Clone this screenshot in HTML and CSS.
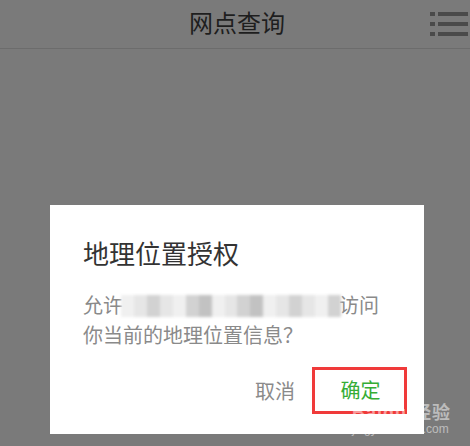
FILE: index.html
```html
<!DOCTYPE html>
<html>

<head>
  <meta charset="utf-8" />
  <title>网点查询</title>
  <link rel="stylesheet" href="styles.css">
</head>

<body>
  <div class="header-sec">
    <span class="header-text">网点查询</span>
    <svg class="menu-icon" width="38" height="26" viewBox="0 0 38 26">
      <rect x="0" y="2" width="5" height="4" fill="#4a4a4a" />
      <rect x="0" y="12" width="5" height="4" fill="#4a4a4a" />
      <rect x="0" y="22" width="5" height="4" fill="#4a4a4a" />
      <rect x="8" y="2" width="30" height="4" fill="#4a4a4a" />
      <rect x="8" y="12" width="30" height="4" fill="#4a4a4a" />
      <rect x="8" y="22" width="30" height="4" fill="#4a4a4a" />
    </svg>
  </div>
  <div class="page-body">
    <div class="dialog">
      <div class="dialog-title">地理位置授权</div>
      <div class="dialog-text">
        允许<span class="mosaic"><i class="m3"></i><i class="m1"></i><i class="m2"></i><i class="m1"></i><i class="m3"></i><i class="m2"></i><i class="m4"></i><i class="m3"></i><i class="m1"></i><i class="m2"></i><i class="m4"></i><i class="m3"></i><i class="m1"></i><i class="m2"></i><i class="m1"></i><i class="m3"></i><i class="m2"></i></span>访问<br>你当前的地理位置信息？
      </div>
      <div class="dialog-buttons">
        <a class="dlg-button cancel">取消</a>
        <a class="dlg-button confirm">确定</a>
      </div>
    </div>
  </div>
  <div class="watermark">
    <div class="wm-logo">Baidu 经验</div>
    <div class="wm-url">jingyan.baidu.com</div>
  </div>
</body>

</html>
```

FILE: styles.css
```css
body {
  padding: 0;
  margin: 0;
  width: 470px;
  height: 446px;
  overflow: hidden;
  background-color: #7a7a7a;
  font-family: "Noto Sans CJK SC", "Noto Sans", sans-serif;
  position: relative;
}

div.header-sec {
  height: 48px;
  border-bottom: 1px solid #6c6c6c;
  display: flex;
  align-items: center;
  justify-content: center;
  position: relative;
}

.header-text {
  font-size: 24px;
  color: #1e1e1e;
  margin-left: 4px;
  margin-top: -6px;
}

.menu-icon {
  position: absolute;
  right: 2px;
  top: 10px;
}

.page-body {
  padding-top: 156px;
  padding-left: 50px;
}

.dialog {
  width: 374px;
  background-color: #ffffff;
  padding: 30px 17px 20px 33px;
  box-sizing: border-box;
}

.dialog-title {
  font-size: 26px;
  line-height: 36px;
  color: #333333;
}

.dialog-text {
  margin-top: 19px;
  font-size: 20px;
  line-height: 30px;
  color: #8a8a8a;
  white-space: nowrap;
}

.mosaic {
  display: inline-flex;
  vertical-align: middle;
  width: 220px;
  height: 22px;
  margin-top: -4px;
  margin-left: -2px;
  margin-right: -2px;
  filter: blur(1.5px);
}

.mosaic i {
  flex: 1;
  height: 100%;
}

.mosaic .m1 { background-color: #e6e6e6; }
.mosaic .m2 { background-color: #d2d2d2; }
.mosaic .m3 { background-color: #f0f0f0; }
.mosaic .m4 { background-color: #c2c2c2; }

.dialog-buttons {
  margin-top: 17px;
  display: flex;
  justify-content: flex-end;
  align-items: center;
  gap: 17px;
}

.dlg-button {
  font-size: 20px;
  line-height: 28px;
}

.cancel {
  color: #8a8a8a;
}

.confirm {
  color: #35ad35;
  width: 95px;
  height: 47px;
  box-sizing: border-box;
  border: 3px solid #f03a3a;
  display: flex;
  align-items: center;
  justify-content: center;
  padding-left: 2px;
  padding-bottom: 2px;
}

.watermark {
  position: absolute;
  left: 352px;
  top: 404px;
  color: rgba(255, 255, 255, 0.5);
  font-family: "Liberation Sans", "Noto Sans CJK SC", sans-serif;
}

.wm-logo {
  font-size: 18px;
  font-weight: bold;
  line-height: 18px;
  letter-spacing: 1px;
}

.wm-url {
  font-size: 12px;
  line-height: 15px;
}
```
